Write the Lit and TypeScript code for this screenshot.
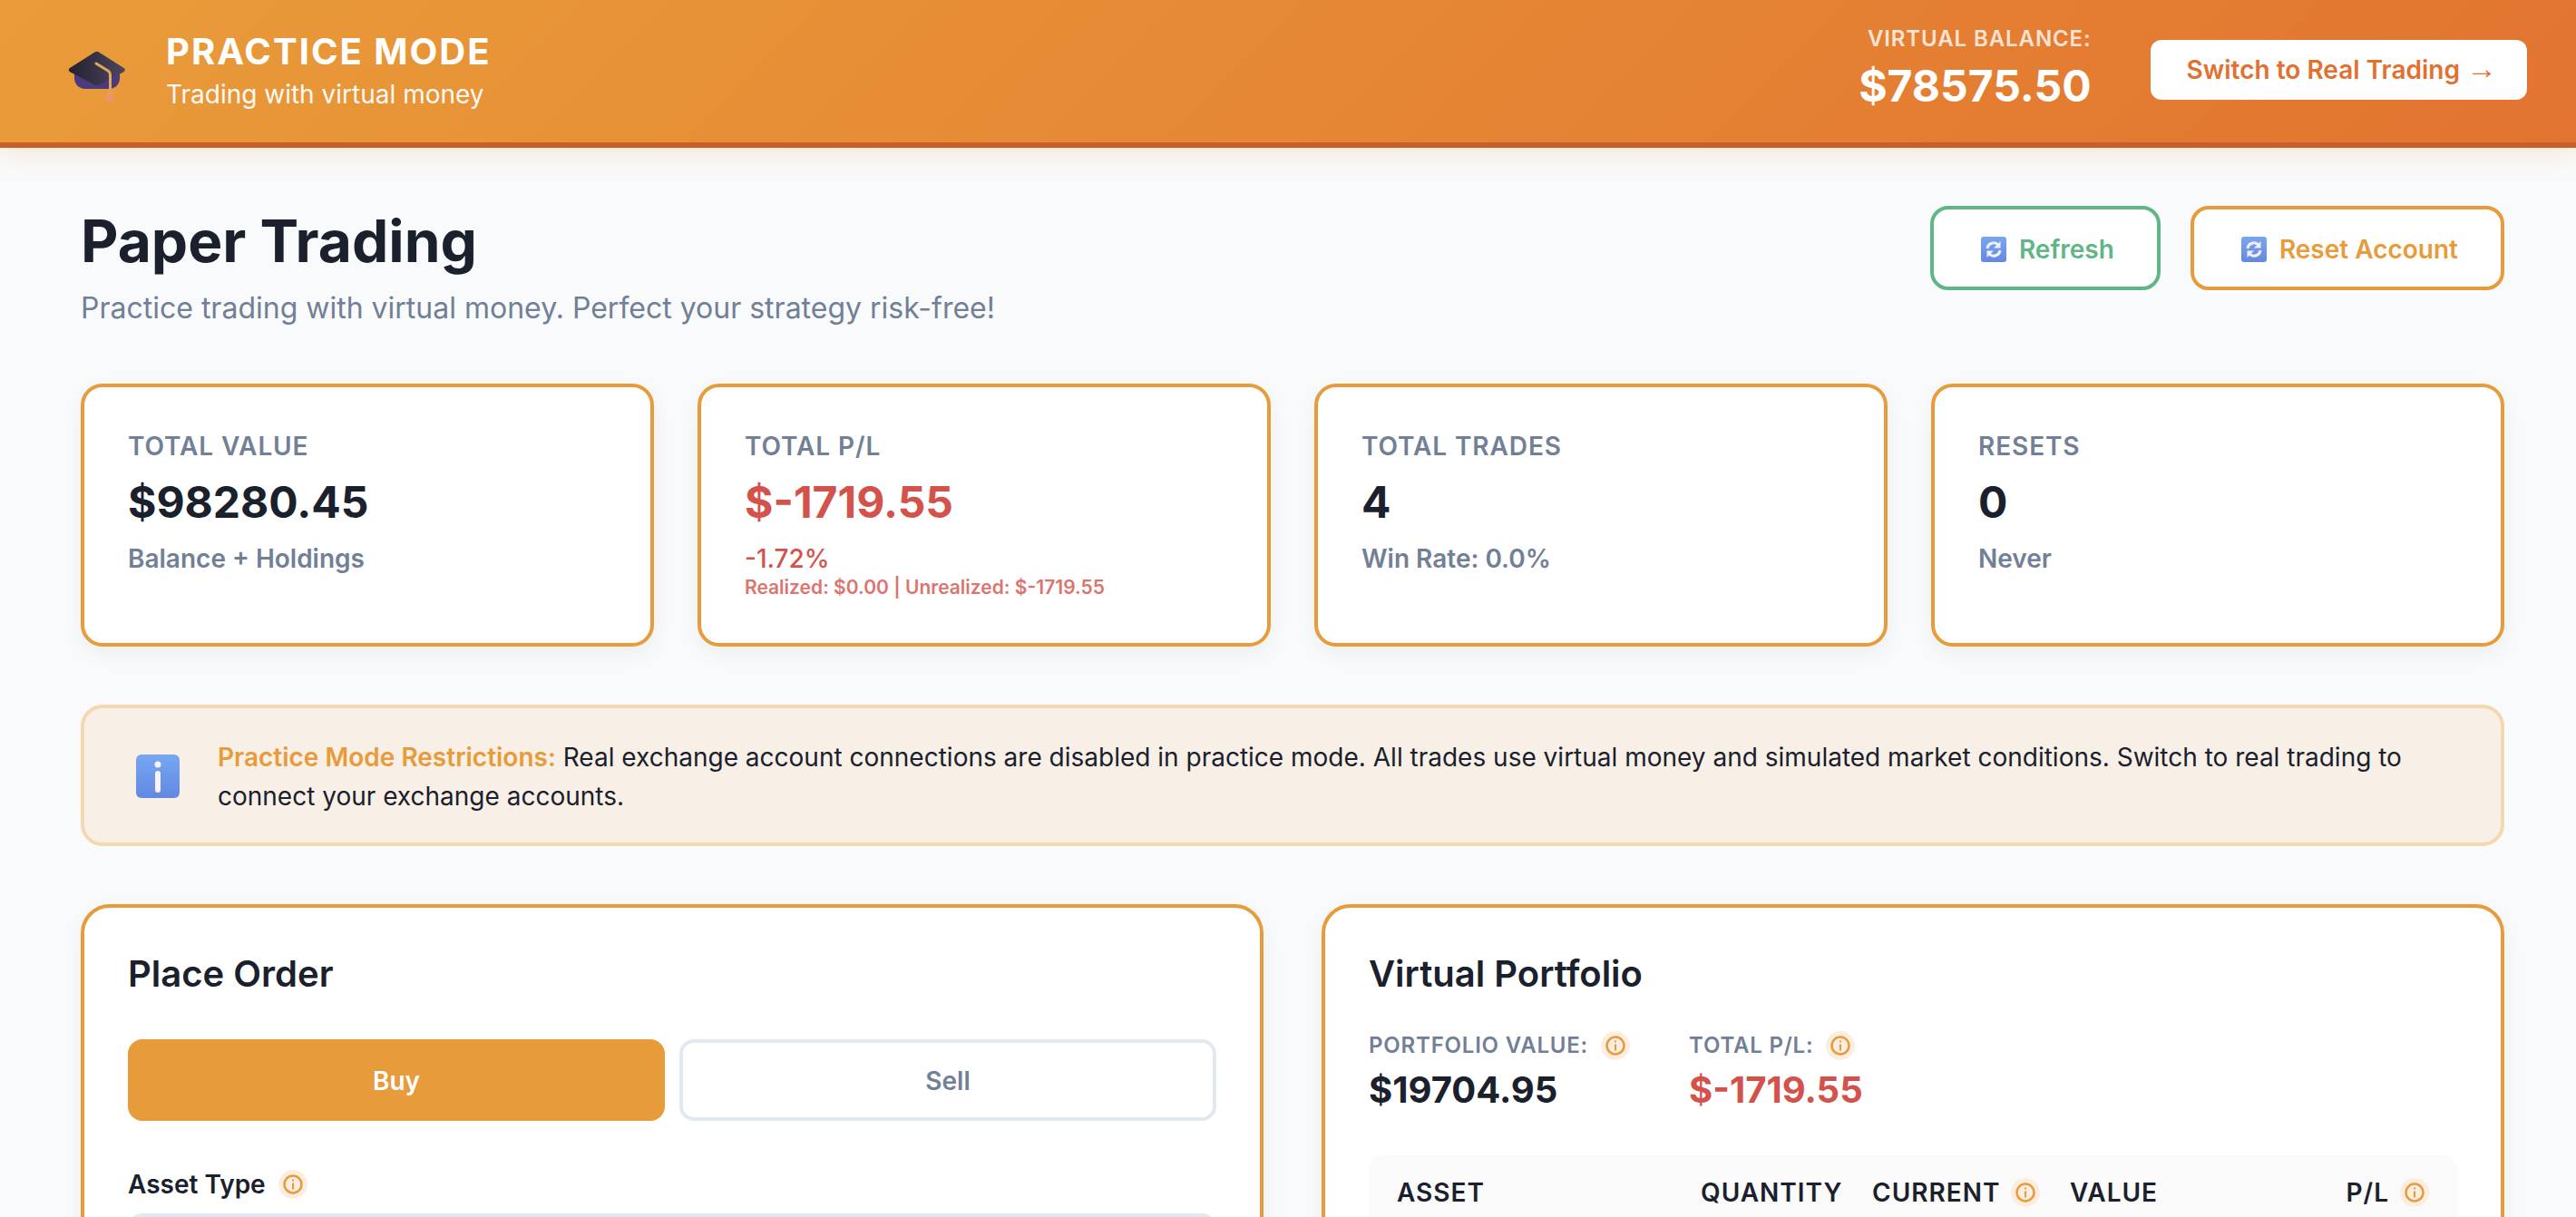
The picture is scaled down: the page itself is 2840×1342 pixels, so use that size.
import { html, css, svg, LitElement } from "lit";
import { customElement } from "lit/decorators.js";

const hatIcon = html`<svg class="hat" viewBox="0 0 64 58" width="64" height="58">
  <defs>
    <linearGradient id="capTop" x1="0" y1="0" x2="1" y2="0">
      <stop offset="0" stop-color="#25212f" />
      <stop offset="1" stop-color="#4e4560" />
    </linearGradient>
    <linearGradient id="tassel" x1="0" y1="0" x2="0" y2="1">
      <stop offset="0" stop-color="#e3a24f" />
      <stop offset="1" stop-color="#f08f7a" />
    </linearGradient>
  </defs>
  <path d="M7 22v8c0 7 5 12 12 12h26c7 0 12-5 12-12v-8z" fill="#4b3a7c" />
  <path d="M29.500 1.500a4 4 0 0 1 4.500 0l27.500 17.500c1.800 1.200 1.800 3 0 4.200L34.500 37.500a5 5 0 0 1-5 0L2 23.200c-1.800-1.200-1.800-3 0-4.200z" fill="url(#capTop)" />
  <path d="M31 14l13 8c1.500 1 2.500 2 2.500 4v16" fill="none" stroke="#dcaa58" stroke-width="3" stroke-linecap="round" />
  <path d="M46.500 40c2 3 4 7 4 11 0 3-2 6-4.500 6s-4-3-4-6c0-4 2.500-8 4.500-11z" fill="url(#tassel)" />
</svg>`;

const refreshIcon = html`<svg class="refresh" viewBox="0 0 28 28" width="28" height="28">
  <defs>
    <linearGradient id="blueTile" x1="0" y1="0" x2="0" y2="1">
      <stop offset="0" stop-color="#7aa6f0" />
      <stop offset="1" stop-color="#6488e2" />
    </linearGradient>
  </defs>
  <rect width="28" height="28" rx="3" fill="url(#blueTile)" />
  <path d="M7 13a7 7 0 0 1 12-4" fill="none" stroke="#f3eefe" stroke-width="3" />
  <path d="M21.500 5v7.500h-7.500z" fill="#f3eefe" />
  <path d="M21 15a7 7 0 0 1-12 4" fill="none" stroke="#f3eefe" stroke-width="3" />
  <path d="M6.500 23v-7.500h7.500z" fill="#f3eefe" />
</svg>`;

const bigInfoIcon = html`<svg class="big-info" viewBox="0 0 48 48" width="48" height="48">
  <defs>
    <linearGradient id="blueInfo" x1="0" y1="0" x2="0" y2="1">
      <stop offset="0" stop-color="#77a7f2" />
      <stop offset="1" stop-color="#6288e2" />
    </linearGradient>
  </defs>
  <rect width="48" height="48" rx="6" fill="url(#blueInfo)" />
  <circle cx="24" cy="11" r="3.500" fill="#f6f2ff" />
  <rect x="21" y="18" width="6" height="24" rx="3" fill="#f6f2ff" />
</svg>`;

const tip = () => html`<span class="tip"><svg viewBox="0 0 32 32" width="32" height="32">
  ${svg`<circle cx="16" cy="16" r="16" fill="#fbeee0" />
  <circle cx="16" cy="16" r="9.500" fill="none" stroke="#e89b3a" stroke-width="2.500" />
  <rect x="15" y="14.500" width="2" height="7" fill="#e89b3a" />
  <rect x="15" y="10.500" width="2" height="2" fill="#e89b3a" />`}
</svg></span>`;

const stats = [
  { label: "TOTAL VALUE", value: "$98280.45", sub: "Balance + Holdings" },
  {
    label: "TOTAL P/L",
    value: "$-1719.55",
    sub: "-1.72%",
    small: "Realized: $0.00 | Unrealized: $-1719.55",
    loss: true,
  },
  { label: "TOTAL TRADES", value: "4", sub: "Win Rate: 0.0%" },
  { label: "RESETS", value: "0", sub: "Never" },
];

@customElement("app-root")
export class AppRoot extends LitElement {
  static styles = css`
    :host {
      display: block;
      height: 1342px;
      overflow: hidden;
      background: #f9fafb;
      color: #1a202c;
      font-family: Inter, "Liberation Sans", sans-serif;
    }
    * {
      box-sizing: border-box;
    }
    svg {
      display: block;
      flex: none;
    }
    .banner {
      display: flex;
      align-items: center;
      justify-content: space-between;
      height: 163px;
      padding: 0 54px 3px 75px;
      background: linear-gradient(135deg, #e99c39 0%, #e27430 100%);
      border-bottom: 6px solid #c95f28;
      box-shadow: 0 8px 24px rgba(232, 155, 58, 0.18);
      position: relative;
      color: #fff;
    }
    .mode {
      display: flex;
      align-items: center;
      gap: 44px;
    }
    .hat {
      margin-top: 16px;
    }
    .mode h2 {
      margin: 0;
      font-size: 40px;
      line-height: 48px;
      font-weight: 700;
      letter-spacing: 2px;
    }
    .mode p {
      margin: 6px 0 0;
      font-size: 28px;
      line-height: 34px;
      opacity: 0.95;
    }
    .balance-wrap {
      display: flex;
      align-items: center;
      gap: 65px;
    }
    .balance {
      margin-bottom: 4px;
      text-align: right;
    }
    .balance span {
      display: block;
      font-size: 24px;
      line-height: 32px;
      font-weight: 600;
      letter-spacing: 0.9px;
      color: rgba(255, 255, 255, 0.8);
    }
    .balance strong {
      display: block;
      margin-top: 7px;
      font-size: 48px;
      line-height: 58px;
      font-weight: 700;
    }
    .switch {
      height: 66px;
      padding: 0 33px 0 40px;
      border: 0;
      border-radius: 12px;
      background: #fff;
      color: #e2702f;
      font: 600 28px Inter, sans-serif;
    }
    .arrow {
      font-family: "Liberation Sans", sans-serif;
      font-size: 34px;
      line-height: 0;
      font-weight: 400;
    }
    main {
      padding: 64px 79px 0 89px;
    }
    .top {
      display: flex;
      justify-content: space-between;
      align-items: flex-start;
    }
    h1 {
      margin: 0;
      font-size: 64px;
      line-height: 77px;
      font-weight: 700;
    }
    .lead {
      margin: 17px 0 0;
      font-size: 32px;
      line-height: 38px;
      color: #718096;
    }
    .actions {
      display: flex;
      gap: 33px;
    }
    .action {
      display: flex;
      align-items: center;
      gap: 14px;
      height: 93px;
      padding: 2px 47px 0 52px;
      background: #fff;
      border: 4px solid #e89b3a;
      border-radius: 20px;
      color: #e89b3a;
      font: 600 28px Inter, sans-serif;
    }
    .action.green {
      border-color: #62b587;
      color: #62b587;
    }
    .stats {
      display: grid;
      grid-template-columns: repeat(4, 1fr);
      gap: 48px;
      margin-top: 64px;
    }
    .stat {
      padding: 48px;
      background: #fff;
      border: 4px solid #e89b3a;
      border-radius: 24px;
      box-shadow: 0 8px 24px rgba(0, 0, 0, 0.05);
    }
    .stat-label {
      font-size: 28px;
      line-height: 34px;
      font-weight: 600;
      letter-spacing: 0.9px;
      color: #718096;
    }
    .stat-value {
      margin-top: 16px;
      font-size: 48px;
      line-height: 58px;
      font-weight: 700;
    }
    .stat-sub {
      margin-top: 16px;
      font-size: 28px;
      line-height: 34px;
      font-weight: 600;
      color: #718096;
    }
    .stat-sub.loss {
      font-weight: 500;
    }
    .stat-small {
      margin-top: 2px;
      font-size: 21px;
      line-height: 26px;
      font-weight: 600;
      color: #d4524c;
      opacity: 0.8;
    }
    .stat .loss,
    .loss {
      color: #d4524c;
    }
    .notice {
      display: flex;
      align-items: center;
      gap: 42px;
      margin-top: 64px;
      padding: 33px 56px 29px 57px;
      background: #f8f0e7;
      border: 4px solid #f5d7b0;
      border-radius: 24px;
      font-size: 28px;
      line-height: 43px;
    }
    .notice svg {
      margin-top: -2px;
    }
    .notice strong {
      font-weight: 600;
      color: #e89b3a;
    }
    .columns {
      display: grid;
      grid-template-columns: 1fr 1fr;
      gap: 64px;
      margin-top: 64px;
    }
    .panel {
      height: 800px;
      padding: 49px 48px 48px;
      background: #fff;
      border: 4px solid #e89b3a;
      border-radius: 32px;
      box-shadow: 0 8px 24px rgba(0, 0, 0, 0.05);
    }
    .panel h3 {
      margin: 0;
      font-size: 40px;
      line-height: 48px;
      font-weight: 600;
    }
    .sides {
      display: grid;
      grid-template-columns: 1fr 1fr;
      gap: 16px;
      margin-top: 48px;
    }
    .side {
      height: 90px;
      padding-top: 2px;
      border-radius: 16px;
      border: 4px solid #e2e8f0;
      background: #fff;
      color: #718096;
      font: 600 28px Inter, sans-serif;
    }
    .side.active {
      border-color: #e89b3a;
      background: #e89b3a;
      color: #fff;
    }
    .field-label {
      display: flex;
      align-items: center;
      gap: 14px;
      margin-top: 54px;
      font-size: 28px;
      line-height: 32px;
      font-weight: 600;
    }
    .select {
      height: 90px;
      margin-top: 16px;
      border: 4px solid #e2e8f0;
      border-radius: 16px;
    }
    .summary {
      display: flex;
      gap: 65px;
      margin-top: 39px;
    }
    .sum-label {
      display: flex;
      align-items: center;
      gap: 14px;
      font-size: 24px;
      line-height: 32px;
      font-weight: 600;
      letter-spacing: 0.8px;
      color: #718096;
    }
    .sum-value {
      margin-top: 9px;
      font-size: 40px;
      line-height: 48px;
      font-weight: 700;
    }
    .table {
      margin-top: 48px;
      height: 400px;
      padding: 25px 31px;
      background: #fafafa;
      border-radius: 16px;
    }
    .thead {
      display: grid;
      grid-template-columns: 335px 189px 218px 1fr auto;
      align-items: center;
      font-size: 28px;
      line-height: 32px;
      font-weight: 600;
      letter-spacing: 1px;
    }
    .th {
      display: flex;
      align-items: center;
      gap: 12px;
    }
  `;

  render() {
    return html`
      <header class="banner">
        <div class="mode">
          ${hatIcon}
          <div>
            <h2>PRACTICE MODE</h2>
            <p>Trading with virtual money</p>
          </div>
        </div>
        <div class="balance-wrap">
          <div class="balance">
            <span>VIRTUAL BALANCE:</span>
            <strong>$78575.50</strong>
          </div>
          <button class="switch">Switch to Real Trading <span class="arrow">→</span></button>
        </div>
      </header>
      <main>
        <div class="top">
          <div>
            <h1>Paper Trading</h1>
            <p class="lead">Practice trading with virtual money. Perfect your strategy risk-free!</p>
          </div>
          <div class="actions">
            <button class="action green">${refreshIcon}Refresh</button>
            <button class="action">${refreshIcon}Reset Account</button>
          </div>
        </div>

        <section class="stats">
          ${stats.map(
            (s) => html`
              <div class="stat">
                <div class="stat-label">${s.label}</div>
                <div class="stat-value ${s.loss ? "loss" : ""}">${s.value}</div>
                <div class="stat-sub ${s.loss ? "loss" : ""}">${s.sub}</div>
                ${s.small ? html`<div class="stat-small">${s.small}</div>` : ""}
              </div>
            `
          )}
        </section>

        <section class="notice">
          ${bigInfoIcon}
          <div>
            <strong>Practice Mode Restrictions:</strong> Real exchange account connections are
            disabled in practice mode. All trades use virtual money and simulated market
            conditions. Switch to real trading to connect your exchange accounts.
          </div>
        </section>

        <section class="columns">
          <div class="panel">
            <h3>Place Order</h3>
            <div class="sides">
              <button class="side active">Buy</button>
              <button class="side">Sell</button>
            </div>
            <div class="field-label">Asset Type ${tip()}</div>
            <div class="select"></div>
          </div>
          <div class="panel">
            <h3>Virtual Portfolio</h3>
            <div class="summary">
              <div>
                <div class="sum-label">PORTFOLIO VALUE: ${tip()}</div>
                <div class="sum-value">$19704.95</div>
              </div>
              <div>
                <div class="sum-label">TOTAL P/L: ${tip()}</div>
                <div class="sum-value loss">$-1719.55</div>
              </div>
            </div>
            <div class="table">
              <div class="thead">
                <div class="th">ASSET</div>
                <div class="th">QUANTITY</div>
                <div class="th">CURRENT ${tip()}</div>
                <div class="th">VALUE</div>
                <div class="th">P/L ${tip()}</div>
              </div>
            </div>
          </div>
        </section>
      </main>
    `;
  }
}

declare global {
  interface HTMLElementTagNameMap {
    "app-root": AppRoot;
  }
}
